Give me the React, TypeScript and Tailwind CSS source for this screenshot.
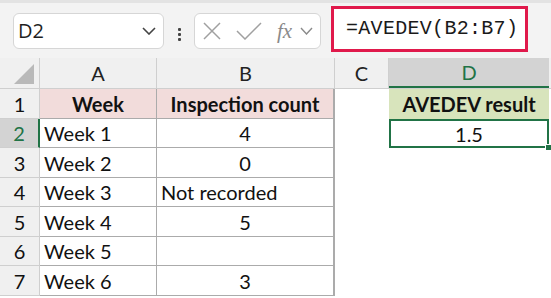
import React from "react";

const cal = { fontFamily: "Lato, 'Open Sans', sans-serif" };

const rows = [
  { n: "1", a: "Week", b: "Inspection count", bAlign: "center", d: "AVEDEV result", h: "h-[30px]" },
  { n: "2", a: "Week 1", b: "4", bAlign: "center", d: "1.5", h: "h-[29px]" },
  { n: "3", a: "Week 2", b: "0", bAlign: "center", d: "", h: "h-[30px]" },
  { n: "4", a: "Week 3", b: "Not recorded", bAlign: "left", d: "", h: "h-[29px]" },
  { n: "5", a: "Week 4", b: "5", bAlign: "center", d: "", h: "h-[30px]" },
  { n: "6", a: "Week 5", b: "", bAlign: "center", d: "", h: "h-[29px]" },
  { n: "7", a: "Week 6", b: "3", bAlign: "center", d: "", h: "h-[30px]" },
];

export default function App() {
  return (
    <div className="w-[551px] h-[298px] bg-white overflow-hidden relative" style={cal}>
      {/* Toolbar */}
      <div className="h-[58px] bg-[#f3f3f3] border-t-[3px] border-[#e3e3e3] flex items-start">
        <div className="ml-[13px] mt-[10px] w-[151px] h-[36px] bg-white border border-[#d6d6d6] rounded-[6px] flex items-center justify-between pl-[4px] pr-[7px]">
          <span className="text-[20px] text-[#1f1f1f]" style={{ fontFamily: "'Open Sans', sans-serif" }}>D2</span>
          <svg width="14" height="8" viewBox="0 0 14 8">
            <path d="M1 1 L7 7 L13 1" fill="none" stroke="#444" strokeWidth="1.6" />
          </svg>
        </div>
        <div className="ml-[14px] mt-[25px] flex flex-col gap-[2px]">
          <div className="w-[3px] h-[3px] bg-[#444] rounded-[1px]" />
          <div className="w-[3px] h-[3px] bg-[#444] rounded-[1px]" />
          <div className="w-[3px] h-[3px] bg-[#444] rounded-[1px]" />
        </div>
        <div className="ml-[13px] mt-[10px] w-[127px] h-[36px] bg-white border border-[#d6d6d6] rounded-[6px] flex items-center pl-[8px]">
          <svg width="18" height="18" viewBox="0 0 18 18">
            <path d="M1 1 L17 17 M17 1 L1 17" stroke="#a0a0a0" strokeWidth="1.5" fill="none" />
          </svg>
          <svg width="26" height="18" viewBox="0 0 26 18" className="ml-[15px]">
            <path d="M1 9 L9 17 L25 1" stroke="#a0a0a0" strokeWidth="1.5" fill="none" />
          </svg>
          <span className="ml-[15px] text-[21px] italic text-[#8a8a8a] leading-none" style={{ fontFamily: "'Liberation Serif', serif" }}>fx</span>
          <svg width="13" height="8" viewBox="0 0 13 8" className="ml-[8px]">
            <path d="M1 1 L6.5 7 L12 1" fill="none" stroke="#8a8a8a" strokeWidth="1.4" />
          </svg>
        </div>
        <div className="ml-[10px] mt-[3px] w-[197px] h-[46px] bg-white border-[3px] border-[#e0194b] flex items-center pl-[12px]">
          <span className="text-[20px] text-[#1a1a1a] tracking-[0.3px]" style={{ fontFamily: "'Liberation Mono', monospace" }}>=AVEDEV(B2:B7)</span>
        </div>
      </div>

      {/* Column header row */}
      <div className="flex h-[31px] bg-[#f0f0f0] text-[20px] text-[#222] border-b border-[#cfcfcf]">
        <div className="w-[40px] h-full border-r border-[#cfcfcf] relative">
          <svg width="20" height="20" viewBox="0 0 20 20" className="absolute right-[5px] bottom-[4px]">
            <path d="M20 0 L20 20 L0 20 Z" fill="#b9b9b9" />
          </svg>
        </div>
        <div className="w-[117px] h-full border-r border-[#cfcfcf] flex items-center justify-center">A</div>
        <div className="w-[178px] h-full border-r border-[#cfcfcf] flex items-center justify-center">B</div>
        <div className="w-[54px] h-full border-r border-[#cfcfcf] flex items-center justify-center">C</div>
        <div className="w-[160px] h-full bg-[#d3d3d3] border-b-[2px] border-[#217346] flex items-center justify-center text-[#217346]">D</div>
        <div className="flex-1 h-full" />
      </div>

      {/* Rows */}
      {rows.map((r, i) => (
        <div key={r.n} className={`flex ${r.h} text-[20px] text-[#111]`}>
          <div
            className={
              i === 1
                ? "w-[40px] h-full bg-[#d3d3d3] border-r-[2px] border-r-[#217346] border-b border-b-[#cfcfcf] flex items-center justify-center text-[#217346]"
                : "w-[40px] h-full bg-[#f0f0f0] border-r border-r-[#cfcfcf] border-b border-b-[#cfcfcf] flex items-center justify-center"
            }
          >
            {r.n}
          </div>
          <div
            className={
              i === 0
                ? "w-[117px] h-full bg-[#f2dcdb] border-r border-b border-[#ababab] flex items-center justify-center font-bold"
                : "w-[117px] h-full border-r border-b border-[#ababab] flex items-center pl-[4px]"
            }
          >
            {r.a}
          </div>
          <div
            className={
              i === 0
                ? "w-[178px] h-full bg-[#f2dcdb] border-r-[2px] border-b border-[#ababab] flex items-center justify-center font-bold"
                : r.bAlign === "left"
                ? "w-[178px] h-full border-r-[2px] border-b border-[#ababab] flex items-center pl-[4px]"
                : "w-[178px] h-full border-r-[2px] border-b border-[#ababab] flex items-center justify-center"
            }
          >
            {r.b}
          </div>
          <div className="w-[54px] h-full" />
          {i === 0 ? (
            <div className="w-[160px] h-full bg-[#d8e4bc] flex items-center justify-center font-bold">{r.d}</div>
          ) : i === 1 ? (
            <div className="w-[160px] h-full border-[2px] border-[#217346] flex items-center justify-center relative">
              {r.d}
              <div className="absolute right-[-5px] bottom-[-5px] w-[7px] h-[7px] bg-[#217346] border border-white" />
            </div>
          ) : (
            <div className="w-[160px] h-full" />
          )}
        </div>
      ))}
    </div>
  );
}
